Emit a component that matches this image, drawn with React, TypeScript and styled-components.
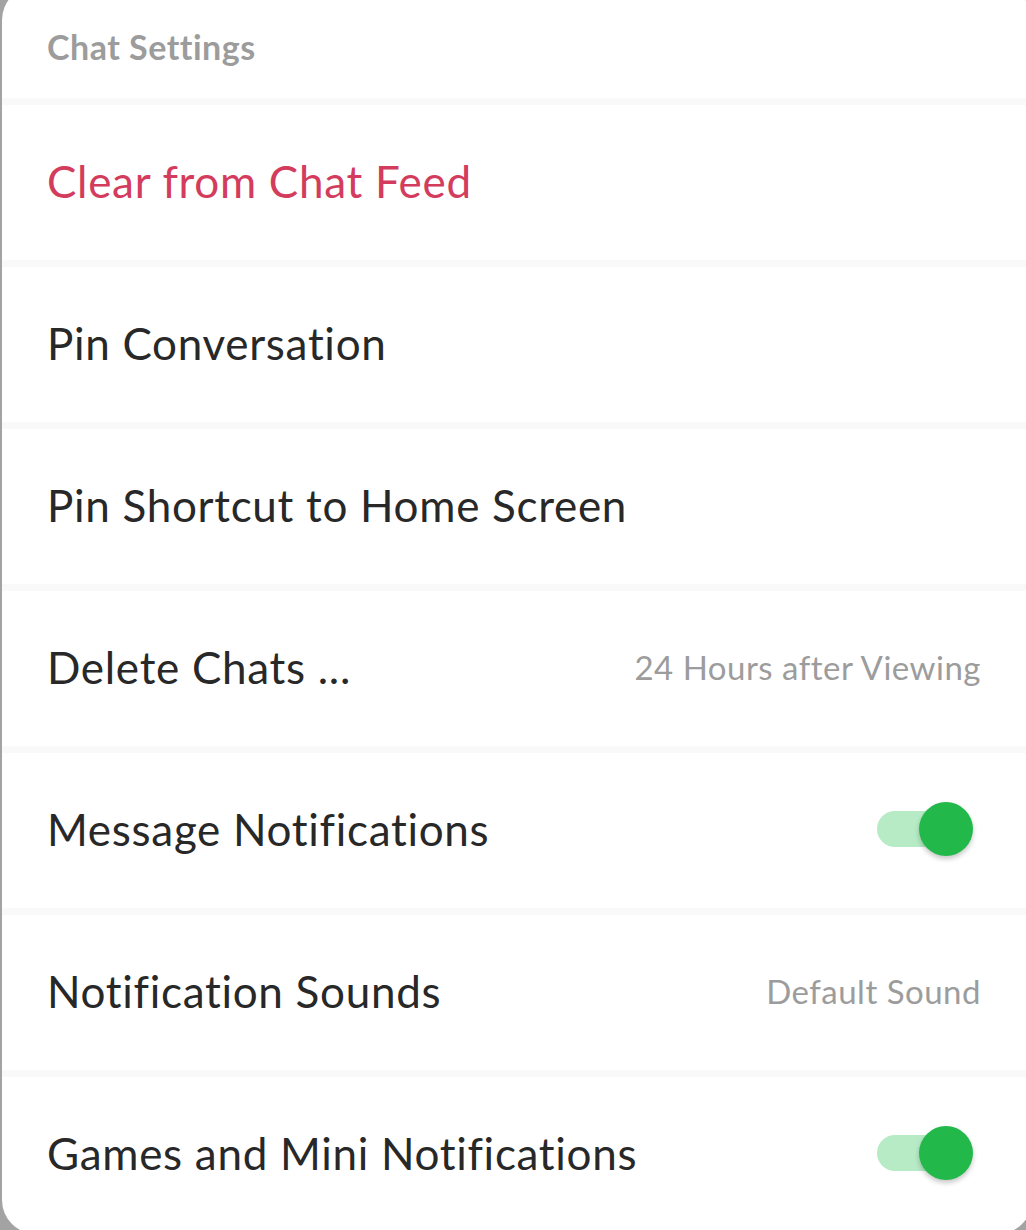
import React, { ReactElement } from 'react';
import styled, { createGlobalStyle } from 'styled-components';

const GlobalStyle = createGlobalStyle`
  html, body {
    margin: 0;
    padding: 0;
    background: #a3a3a3;
  }
  body {
    font-family: Lato, "Noto Sans", "Liberation Sans", sans-serif;
  }
`;

const Frame = styled.div`
  width: 1026px;
  height: 1230px;
  overflow: hidden;
  background: #a3a3a3;
`;

const Sheet = styled.section`
  margin: -14px -6px 0 2px;
  padding-top: 14px;
  height: 1234px;
  overflow: hidden;
  background: #ffffff;
  border-radius: 34px;
  display: flex;
  flex-direction: column;
`;

const Header = styled.h6`
  margin: 0;
  height: 98px;
  flex-shrink: 0;
  padding: 0 0 6px 45px;
  box-sizing: border-box;
  display: flex;
  align-items: center;
  font-size: 34px;
  font-weight: 700;
  letter-spacing: 0.5px;
  color: #9c9c9c;
`;

const Divider = styled.div`
  height: 7px;
  background: #f9f9f9;
  flex-shrink: 0;
`;

const Row = styled.div`
  height: 155px;
  flex-shrink: 0;
  display: flex;
  align-items: center;
  justify-content: space-between;
  padding: 0 51px 3px 45px;
  box-sizing: border-box;
`;

const Label = styled.span<{ $danger?: boolean }>`
  font-size: 44px;
  font-weight: 400;
  letter-spacing: 0.7px;
  color: ${({ $danger }) => ($danger ? '#d33c5c' : '#282828')};
`;

const Value = styled.span`
  font-size: 33px;
  color: #9c9c9c;
  letter-spacing: 0.5px;
`;

const Switch = styled.div`
  position: relative;
  width: 96px;
  height: 56px;
  margin-right: 8px;
  display: flex;
  align-items: center;
`;

const Track = styled.div`
  width: 84px;
  height: 36px;
  border-radius: 18px;
  background: #b6ebc6;
`;

const Knob = styled.div`
  position: absolute;
  right: 0;
  top: 1px;
  width: 54px;
  height: 54px;
  border-radius: 50%;
  background: #22b84a;
  box-shadow: 0 3px 5px rgba(0, 0, 0, 0.22);
`;

type Item = { label: string; danger?: boolean; value?: string; toggle?: boolean };

const items: Item[] = [
  { label: 'Clear from Chat Feed', danger: true },
  { label: 'Pin Conversation' },
  { label: 'Pin Shortcut to Home Screen' },
  { label: 'Delete Chats ...', value: '24 Hours after Viewing' },
  { label: 'Message Notifications', toggle: true },
  { label: 'Notification Sounds', value: 'Default Sound' },
  { label: 'Games and Mini Notifications', toggle: true },
];

export default function App(): ReactElement {
  return (
    <Frame>
      <GlobalStyle />
      <Sheet>
        <Header>Chat Settings</Header>
        {items.map((e) => (
          <React.Fragment key={e.label}>
            <Divider />
            <Row>
              <Label $danger={e.danger}>{e.label}</Label>
              {e.value && <Value>{e.value}</Value>}
              {e.toggle && (
                <Switch>
                  <Track />
                  <Knob />
                </Switch>
              )}
            </Row>
          </React.Fragment>
        ))}
      </Sheet>
    </Frame>
  );
}
